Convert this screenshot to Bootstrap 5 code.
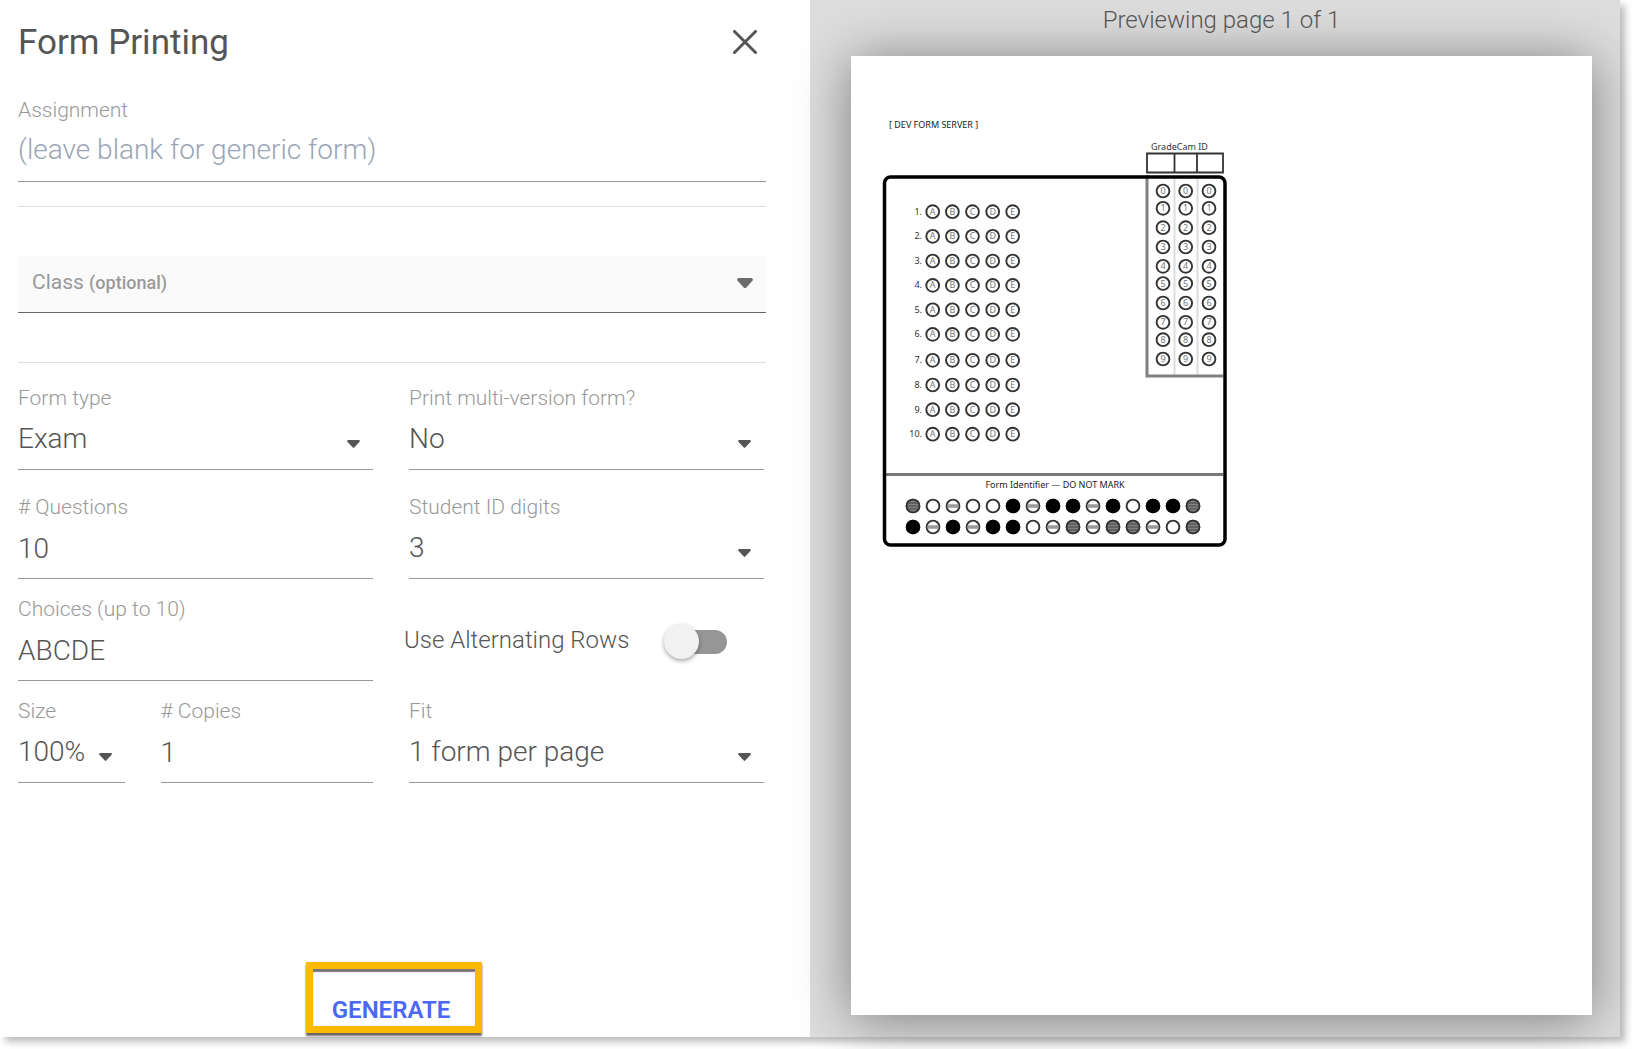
<!DOCTYPE html>
<html lang="en">
<head>
<meta charset="utf-8">
<meta name="viewport" content="width=device-width, initial-scale=1">
<title>Form Printing</title>
<link href="https://cdn.jsdelivr.net/npm/bootstrap@5.3.0/dist/css/bootstrap.min.css" rel="stylesheet">
<style>
  body { font-family: Roboto, "Liberation Sans", sans-serif; color: #555; background: #fff; font-weight: 300; }
  .print-dialog { min-height: calc(100vh - 12px); margin: 0 12px 12px 0; background: #fff; box-shadow: 5px 5px 7px rgba(0,0,0,.26); }
  .settings-pane { padding: 0 44px 4px 18px; }
  .dialog-head { height: 84px; margin-bottom: 12px; padding-right: 9px; }
  .dialog-title { font-size: 35px; line-height: 42px; padding-top: 2px; font-weight: 400; }
  .close-btn { width: 24px; height: 24px; }
  .field-label { display: block; font-size: 21px; line-height: 28px; color: #999; }
  .field-box, .field-box:focus { height: 58px; padding: 0 0 3px; border: 0; border-bottom: 1px solid #999; border-radius: 0; background-color: transparent; box-shadow: none; color: #555; font-size: 28px; line-height: 36px; font-weight: 300; }
  .field-box::placeholder { color: #9aa5b5; opacity: 1; }
  input.assignment-box, input.assignment-box:focus { padding-bottom: 7px; }
  select.field-box, select.field-box:focus { padding-right: 40px; background-size: 13px 8px; background-position: right 13px bottom 21px;
    background-image: url("data:image/svg+xml,%3Csvg xmlns='http://www.w3.org/2000/svg' viewBox='0 0 13 8'%3E%3Cpath d='M1 0h11q1.500 .6.600 1.700L7.200 7.600q-.7.600-1.400 0L.4 1.700Q-.5.600 1 0z' fill='%23555'/%3E%3C/svg%3E"); }
  .rule { height: 1px; background: #dedede; }
  .class-picker { height: 57px; margin: 49px 0; padding: 0 13px 3px 14px; border: 0; border-bottom: 1px solid #666; border-radius: 0; background: #fafafa; color: #999; font-size: 21px; line-height: 28px; font-weight: 400; }
  .class-picker small { font-size: 18px; font-weight: 500; }
  .options-grid { padding: 21px 2px 0 0; }
  .options-grid .row { --bs-gutter-x: 36px; }
  .size-field { flex: 0 0 30%; }
  .gap-wide { gap: 36px; }
  .mt-first { margin-top: 23px; }
  .toggle-cell { padding-left: 13px; padding-top: 3px; gap: 38px; font-size: 24px; line-height: 32px; }
  .slide-toggle { appearance: none; position: relative; flex: none; width: 60px; height: 24px; margin: 4px 0 0; border-radius: 12px; background: #969696; }
  .slide-toggle::before { content: ""; position: absolute; left: -3px; top: -6px; width: 35px; height: 35px; border-radius: 50%; background: #f1f1f1; box-shadow: 0 2px 4px rgba(0,0,0,.35); }
  .slide-toggle:checked::before { left: 28px; }
  .generate-btn { height: 71px; margin-left: 4px; padding: 27px 25px 0 19px; border: 7px solid #fcb900; border-radius: 0; background: #fff; color: #4a67f5; font-size: 24px; line-height: 28px; font-weight: 600; box-shadow: 0 3px 2px #666, inset 0 3px 1px #777; }
  .preview-pane { background: #ddd; padding: 0 28px 22px 41px; }
  .preview-caption { height: 56px; padding-top: 4px; font-size: 24px; line-height: 32px; text-align: center; }
  .sheet { background: #fff; box-shadow: 0 4px 50px rgba(0,0,0,.44); }
  .sheet svg { display: block; width: 100%; height: auto; }
  .sheet text { font-family: "Noto Sans", "Open Sans", sans-serif; font-weight: 400; }
</style>
<script src="https://cdn.jsdelivr.net/npm/bootstrap@5.3.0/dist/js/bootstrap.bundle.min.js"></script>
</head>
<body>
<div class="print-dialog d-flex">
  <form class="settings-pane col-6 d-flex flex-column">
    <header class="dialog-head d-flex align-items-center justify-content-between">
      <h1 class="dialog-title m-0">Form Printing</h1>
      <button type="button" class="close-btn btn p-0 border-0 d-flex" aria-label="Close">
        <svg width="24" height="24" viewBox="0 0 24 24" fill="none" stroke="#555" stroke-width="3" stroke-linecap="round" aria-hidden="true"><path d="M1.500 1.500l21 21M22.500 1.500l-21 21"/></svg>
      </button>
    </header>

    <div>
      <label class="field-label" for="assignment">Assignment</label>
      <input id="assignment" class="field-box assignment-box form-control" type="text" placeholder="(leave blank for generic form)">
    </div>
    <div class="rule mt-4"></div>

    <button type="button" class="class-picker d-flex align-items-center w-100 text-start" aria-haspopup="listbox">
      <span>Class <small>(optional)</small></span>
      <svg class="ms-auto" width="16" height="10" viewBox="0 0 16 10" aria-hidden="true"><path d="M2 0h12q3 .6 1.300 3L9.300 9.400q-1.300 1.200-2.600 0L.7 3Q-1 .6 2 0z" fill="#6c6c6c"/></svg>
    </button>
    <div class="rule"></div>

    <div class="options-grid">
      <div class="row">
        <div class="col-6">
          <label class="field-label" for="formType">Form type</label>
          <select id="formType" class="field-box form-select"><option>Exam</option></select>
        </div>
        <div class="col-6">
          <label class="field-label" for="multiVersion">Print multi-version form?</label>
          <select id="multiVersion" class="field-box form-select"><option>No</option></select>
        </div>
      </div>
      <div class="row mt-first">
        <div class="col-6">
          <label class="field-label" for="questions"># Questions</label>
          <input id="questions" class="field-box form-control" type="text" value="10">
        </div>
        <div class="col-6">
          <label class="field-label" for="digits">Student ID digits</label>
          <select id="digits" class="field-box form-select"><option>3</option></select>
        </div>
      </div>
      <div class="row mt-3">
        <div class="col-6">
          <label class="field-label" for="choices">Choices (up to 10)</label>
          <input id="choices" class="field-box form-control" type="text" value="ABCDE">
        </div>
        <div class="toggle-cell col-6 d-flex align-items-center">
          <label for="altRows">Use Alternating Rows</label>
          <input id="altRows" class="slide-toggle" type="checkbox" role="switch">
        </div>
      </div>
      <div class="row mt-3">
        <div class="col-6 d-flex gap-wide">
          <div class="size-field">
            <label class="field-label" for="size">Size</label>
            <select id="size" class="field-box form-select"><option>100%</option></select>
          </div>
          <div class="flex-fill">
            <label class="field-label" for="copies"># Copies</label>
            <input id="copies" class="field-box form-control" type="text" value="1">
          </div>
        </div>
        <div class="col-6">
          <label class="field-label" for="fit">Fit</label>
          <select id="fit" class="field-box form-select"><option>1 form per page</option></select>
        </div>
      </div>
    </div>

    <footer class="mt-auto text-center">
      <button type="submit" class="generate-btn d-inline-flex align-items-start">GENERATE</button>
    </footer>
  </form>

  <section class="preview-pane col-6">
    <div class="preview-caption">Previewing page 1 of 1</div>
    <div class="sheet">
      <svg id="sheet" viewBox="0 0 741 959" role="img" aria-label="Answer form preview">
        <text x="38" y="72" font-size="9" fill="#222">[ DEV FORM SERVER ]</text>
        <text x="300" y="94" font-size="9" fill="#333">GradeCam ID</text>
        <g fill="none">
          <path d="M323.500 120v200M346.500 120v200" stroke="#ddd" stroke-width="2"/>
          <path d="M296 119v201h76" stroke="#808080" stroke-width="3"/>
          <path d="M296 97.500h76v19h-76zM323.500 97v19M346 97v19" stroke="#333" stroke-width="1.800"/>
          <path d="M35 418.500h337" stroke="#777" stroke-width="3"/>
          <rect x="33.500" y="121" width="340.500" height="368" rx="6" stroke="#000" stroke-width="3.500"/>
        </g>
        <text x="204" y="432" text-anchor="middle" font-size="9" fill="#222">Form Identifier — DO NOT MARK</text>
      </svg>
    </div>
  </section>
</div>
<script>
  const sheet = document.getElementById('sheet');
  function add(tag, attrs, text) {
    const el = document.createElementNS('http://www.w3.org/2000/svg', tag);
    for (const k in attrs) el.setAttribute(k, attrs[k]);
    if (text) el.textContent = text;
    sheet.appendChild(el);
  }
  function bubble(x, y, ch) {
    add('circle', { cx: x, cy: y, r: 6.4, fill: '#fff', stroke: '#333', 'stroke-width': 1.9 });
    if (ch) add('text', { x: x, y: y + 3, 'text-anchor': 'middle', 'font-size': 9, fill: '#777' }, ch);
  }
  // Answer rows 1-10 with choices A-E
  [155.7, 180.3, 205, 229.4, 253.8, 278.4, 304.3, 329, 353.7, 378.2].forEach((y, i) => {
    add('text', { x: 71, y: y + 3, 'text-anchor': 'end', 'font-size': 9, fill: '#333' }, (i + 1) + '.');
    [81.7, 101.4, 121.5, 141.7, 161.7].forEach((x, j) => bubble(x, y, 'ABCDE'[j]));
  });
  // Student ID digit columns
  [135, 152.3, 171.7, 191, 210.3, 227.5, 247, 266.3, 283.7, 303].forEach((y, i) =>
    [312, 334.7, 358].forEach(x => bubble(x, y, String(i))));
  // Identifier code: d = dark stripes, s = single stripe, o = empty, x = filled
  ['dosooxsxxsxoxxd', 'xsxsxxosdsddsod'].forEach((code, r) => {
    const y = r ? 471 : 450;
    [...code].forEach((c, i) => {
      const x = 62 + i * 20;
      bubble(x, y);
      if (c === 'x') add('circle', { cx: x, cy: y, r: 7.2, fill: '#000' });
      if (c === 's') add('path', { d: `M${x - 5.500} ${y}h11`, stroke: '#999', 'stroke-width': 3.500 });
      if (c === 'd') {
        add('circle', { cx: x, cy: y, r: 6.4, fill: '#808080', stroke: '#333', 'stroke-width': 1.700 });
        add('path', { d: `M${x - 5} ${y - 3}h10M${x - 6} ${y}h12M${x - 5} ${y + 3}h10`, stroke: '#444', 'stroke-width': 1 });
      }
    });
  });
</script>
</body>
</html>
